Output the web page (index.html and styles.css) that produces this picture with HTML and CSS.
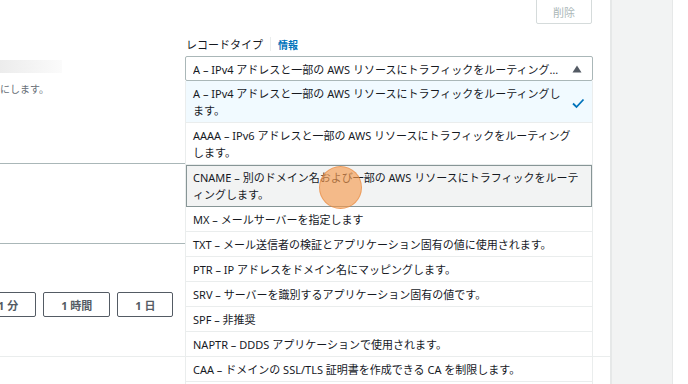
FILE: index.html
```html
<!DOCTYPE html>
<html lang="ja">
<head>
    <meta charset="UTF-8">
    <meta name="viewport" content="width=device-width, initial-scale=1.0">
    <title>レコードを作成</title>
    <link rel="stylesheet" href="styles.css">
</head>
<body>
    <div class="main">
        <div class="toolbar">
            <button class="delete-btn" disabled>削除</button>
        </div>

        <div class="record-row">
            <div class="name-col">
                <div class="domain-suffix"></div>
                <div class="hint">にします。</div>
            </div>
            <div class="type-col">
                <div class="field-label">
                    <span>レコードタイプ</span>
                    <span class="divider"></span>
                    <a class="info-link">情報</a>
                </div>
                <div class="select">
                    <span class="select-text">A – IPv4 アドレスと一部の AWS リソースにトラフィックをルーティングします。</span>
                    <svg class="caret" width="10" height="8" viewBox="0 0 10 8"><path d="M5 0.5 L9.5 7.5 L0.5 7.5 Z" fill="#545b64"/></svg>
                </div>
            </div>
        </div>

        <div class="value-box"></div>

        <div class="ttl-buttons">
            <button class="ttl-btn">1 分</button>
            <button class="ttl-btn">1 時間</button>
            <button class="ttl-btn">1 日</button>
        </div>

        <div class="section-divider"></div>

        <!-- open dropdown of the record type select -->
        <ul class="options">
            <li class="option selected">
                <span class="option-text">A – IPv4 アドレスと一部の AWS リソースにトラフィックをルーティングします。</span>
                <svg class="check" width="14" height="14" viewBox="0 0 14 14"><path d="M2 7.5 L5.5 11 L12.5 3.5" fill="none" stroke="#0073bb" stroke-width="1.8"/></svg>
            </li>
            <li class="option">AAAA – IPv6 アドレスと一部の AWS リソースにトラフィックをルーティングします。</li>
            <li class="option hover">CNAME – 別のドメイン名および一部の AWS リソースにトラフィックをルーティングします。</li>
            <li class="option">MX – メールサーバーを指定します</li>
            <li class="option">TXT – メール送信者の検証とアプリケーション固有の値に使用されます。</li>
            <li class="option">PTR – IP アドレスをドメイン名にマッピングします。</li>
            <li class="option">SRV – サーバーを識別するアプリケーション固有の値です。</li>
            <li class="option">SPF – 非推奨</li>
            <li class="option">NAPTR – DDDS アプリケーションで使用されます。</li>
            <li class="option">CAA – ドメインの SSL/TLS 証明書を作成できる CA を制限します。</li>
            <li class="option">DS – 委任されたサブドメインのゾーンの DNSSEC 署名キーを識別します。</li>
        </ul>

        <div class="cursor-dot"></div>
    </div>

    <div class="side-panel"></div>
</body>
</html>
```

FILE: styles.css
```css
* {
    margin: 0;
    padding: 0;
    box-sizing: border-box;
    font-family: 'Noto Sans', 'Noto Sans CJK JP', sans-serif;
}

body {
    width: 688px;
    height: 384px;
    overflow: hidden;
    display: flex;
    background: #fff;
    color: #16191f;
}

.main {
    position: relative;
    width: 610px;
    height: 384px;
    overflow: hidden;
}

.toolbar {
    height: 24px;
    display: flex;
    justify-content: flex-end;
    padding-right: 18px;
}

.delete-btn {
    width: 56px;
    height: 32px;
    margin-top: -8px;
    background: #fff;
    border: 1px solid #d5dbdb;
    border-radius: 2px;
    color: #aab7b8;
    font-size: 11px;
    padding-top: 7px;
}

.record-row {
    display: flex;
    margin-top: 12px;
}

.name-col {
    width: 185px;
    padding-top: 24px;
}

.domain-suffix {
    width: 62px;
    height: 13px;
    background: linear-gradient(90deg, #ececec, #fbfbfb);
}

.hint {
    margin-top: 8px;
    font-size: 10px;
    line-height: 16px;
    color: #687078;
}

.type-col {
    width: 408px;
}

.field-label {
    display: flex;
    align-items: center;
    height: 16px;
    margin-bottom: 4px;
    padding-left: 1px;
    font-size: 11px;
}

.divider {
    width: 1px;
    height: 14px;
    background: #eaeded;
    margin: 0 7px 0 7px;
}

.info-link {
    color: #0073bb;
    font-size: 10px;
    font-weight: bold;
}

.select {
    display: flex;
    align-items: center;
    height: 25px;
    border: 1px solid #aab7b8;
    border-radius: 2px;
    padding: 0 10px 0 7px;
    font-size: 11px;
}

.select-text {
    flex: 1;
    white-space: nowrap;
    overflow: hidden;
    text-overflow: ellipsis;
    padding-right: 12px;
}

.value-box {
    width: 590px;
    height: 81px;
    margin-top: 66px;
    margin-left: -2px;
    border: 1px solid #aab7b8;
}

.ttl-buttons {
    display: flex;
    gap: 7px;
    margin-top: 48px;
    margin-left: -20px;
}

.ttl-btn {
    height: 25px;
    padding: 0 17px;
    background: #fff;
    border: 1px solid #545b64;
    border-radius: 2px;
    color: #545b64;
    font-size: 11px;
    font-weight: bold;
}

.section-divider {
    height: 1px;
    margin-top: 39px;
    background: #eaeded;
}

.options {
    position: absolute;
    left: 185px;
    top: 81px;
    width: 408px;
    list-style: none;
    background: #fff;
    border-left: 1px solid #eaeded;
    border-right: 1px solid #eaeded;
    font-size: 11px;
    line-height: 17px;
}

.option {
    display: flex;
    align-items: center;
    padding: 4px 11px 3px 7px;
    border-bottom: 1px solid #eaeded;
}

.option.selected {
    background: #f1faff;
    padding-right: 7px;
}

.option-text {
    flex: 1;
    padding-right: 6px;
}

.check {
    flex-shrink: 0;
    margin-top: 2px;
}

.option.hover {
    background: #f2f3f3;
    outline: 1px solid #879596;
    outline-offset: -1px;
}

.cursor-dot {
    position: absolute;
    left: 319px;
    top: 166px;
    width: 43px;
    height: 43px;
    border-radius: 50%;
    background: rgba(245, 155, 80, 0.65);
    border: 1px solid rgba(230, 128, 50, 0.5);
}

.side-panel {
    width: 63px;
    height: 384px;
    background: #f2f3f3;
    border-left: 2px solid #e6e8e8;
    border-right: 1px solid #e6e8e8;
}
```
